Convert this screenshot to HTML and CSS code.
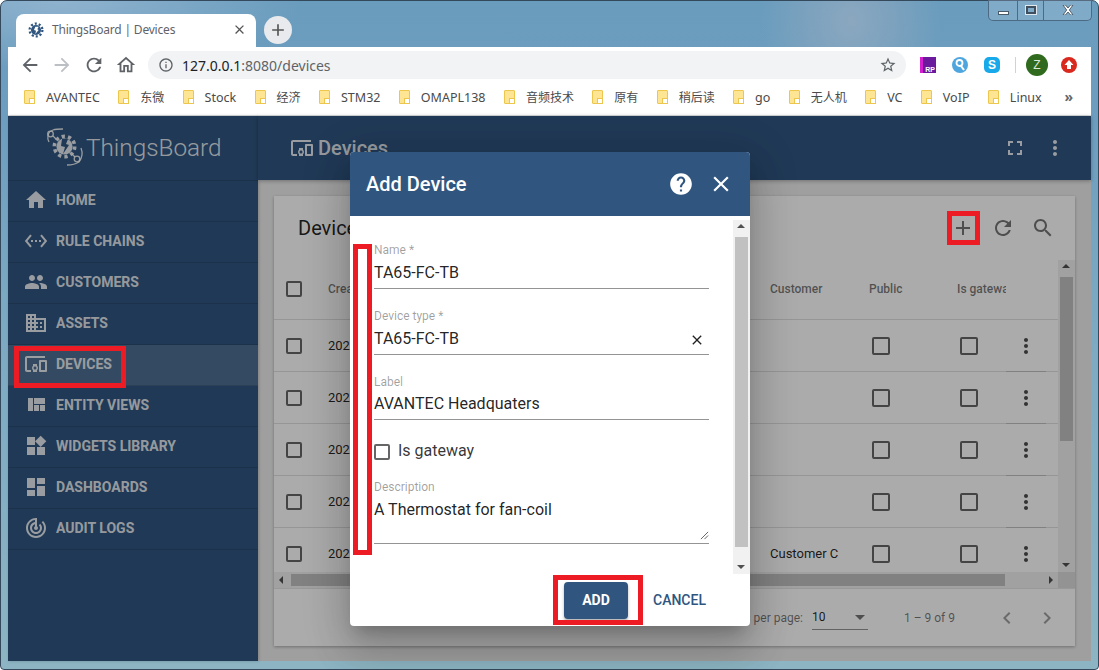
FILE: index.html
```html
<!DOCTYPE html>
<html lang="en">
<head>
<meta charset="utf-8">
<title>ThingsBoard | Devices</title>
<link rel="stylesheet" href="styles.css">
</head>
<body>
<svg class="defs" width="0" height="0" aria-hidden="true">
  <symbol id="i-home" viewBox="0 0 24 24"><path d="M10 20v-6h4v6h5v-8h3L12 3 2 12h3v8z"/></symbol>
  <symbol id="i-rule" viewBox="0 0 24 24"><path d="M7.77 6.76L6.23 5.48.82 12l5.41 6.52 1.54-1.28L3.42 12l4.35-5.24zM7 13h2v-2H7v2zm10-2h-2v2h2v-2zm-6 2h2v-2h-2v2zm6.77-7.52l-1.54 1.28L20.58 12l-4.35 5.24 1.54 1.28L23.18 12l-5.41-6.52z"/></symbol>
  <symbol id="i-people" viewBox="0 0 24 24"><path d="M16 11c1.66 0 2.99-1.34 2.99-3S17.66 5 16 5c-1.66 0-3 1.34-3 3s1.34 3 3 3zm-8 0c1.66 0 2.99-1.34 2.99-3S9.66 5 8 5C6.34 5 5 6.34 5 8s1.34 3 3 3zm0 2c-2.33 0-7 1.17-7 3.5V19h14v-2.5c0-2.33-4.67-3.5-7-3.5zm8 0c-.29 0-.62.02-.97.05 1.16.84 1.97 1.97 1.97 3.45V19h6v-2.5c0-2.33-4.67-3.5-7-3.5z"/></symbol>
  <symbol id="i-domain" viewBox="0 0 24 24"><path d="M12 7V3H2v18h20V7H12zM6 19H4v-2h2v2zm0-4H4v-2h2v2zm0-4H4V9h2v2zm0-4H4V5h2v2zm4 12H8v-2h2v2zm0-4H8v-2h2v2zm0-4H8V9h2v2zm0-4H8V5h2v2zm10 12h-8v-2h2v-2h-2v-2h2v-2h-2V9h8v10zm-2-8h-2v2h2v-2zm0 4h-2v2h2v-2z"/></symbol>
  <symbol id="i-devices" viewBox="0 0 24 24"><path d="M3 6h18V4H3c-1.1 0-2 .9-2 2v12c0 1.1.9 2 2 2h4v-2H3V6zm10 6H9v1.78c-.61.55-1 1.33-1 2.22s.39 1.67 1 2.22V20h4v-1.78c.61-.55 1-1.34 1-2.22s-.39-1.67-1-2.22V12zm-2 5.5c-.83 0-1.5-.67-1.5-1.5s.67-1.5 1.5-1.5 1.5.67 1.5 1.5-.67 1.5-1.5 1.5zM22 8h-6c-.5 0-1 .5-1 1v10c0 .5.5 1 1 1h6c.5 0 1-.5 1-1V9c0-.5-.5-1-1-1zm-1 10h-4v-8h4v8z"/></symbol>
  <symbol id="i-quilt" viewBox="0 0 24 24"><path d="M10 18h5v-6h-5v6zm-6 0h5V5H4v13zm12 0h5v-6h-5v6zM10 5v6h11V5H10z"/></symbol>
  <symbol id="i-widgets" viewBox="0 0 24 24"><path d="M13 13v8h8v-8h-8zM3 21h8v-8H3v8zM3 3v8h8V3H3zm13.66-1.31L11 7.34 16.66 13l5.66-5.66-5.66-5.65z"/></symbol>
  <symbol id="i-dash" viewBox="0 0 24 24"><path d="M3 13h8V3H3v10zm0 8h8v-6H3v6zm10 0h8V11h-8v10zm0-18v6h8V3h-8z"/></symbol>
  <symbol id="i-track" viewBox="0 0 24 24"><path d="M19.07 4.93l-1.41 1.41C19.1 7.79 20 9.79 20 12c0 4.42-3.58 8-8 8s-8-3.58-8-8c0-4.08 3.05-7.44 7-7.93v2.02C8.16 6.57 6 9.03 6 12c0 3.31 2.69 6 6 6s6-2.69 6-6c0-1.66-.67-3.16-1.76-4.24l-1.41 1.41C15.55 9.9 16 10.9 16 12c0 2.21-1.79 4-4 4s-4-1.79-4-4c0-1.86 1.28-3.41 3-3.86v2.14c-.6.35-1 .98-1 1.72 0 1.1.9 2 2 2s2-.9 2-2c0-.74-.4-1.38-1-1.72V2h-1C6.48 2 2 6.48 2 12s4.48 10 10 10 10-4.48 10-10c0-2.76-1.12-5.26-2.93-7.07z"/></symbol>
  <symbol id="i-help" viewBox="0 0 24 24"><path d="M12 2C6.48 2 2 6.48 2 12s4.48 10 10 10 10-4.48 10-10S17.52 2 12 2zm1 17h-2v-2h2v2zm2.07-7.75l-.9.92C13.45 12.9 13 13.5 13 15h-2v-.5c0-1.1.45-2.1 1.17-2.83l1.24-1.26c.37-.36.59-.86.59-1.41 0-1.1-.9-2-2-2s-2 .9-2 2H8c0-2.21 1.79-4 4-4s4 1.79 4 4c0 .88-.36 1.68-.93 2.25z"/></symbol>
  <symbol id="i-close" viewBox="0 0 24 24"><path d="M19 6.41L17.59 5 12 10.59 6.41 5 5 6.41 10.59 12 5 17.59 6.41 19 12 13.41 17.59 19 19 17.59 13.41 12z"/></symbol>
  <symbol id="i-add" viewBox="0 0 24 24"><path d="M19 13h-6v6h-2v-6H5v-2h6V5h2v6h6v2z"/></symbol>
  <symbol id="i-refresh" viewBox="0 0 24 24"><path d="M17.65 6.35C16.2 4.9 14.21 4 12 4c-4.42 0-7.99 3.58-7.99 8s3.57 8 7.99 8c3.73 0 6.84-2.55 7.73-6h-2.08c-.82 2.33-3.04 4-5.65 4-3.31 0-6-2.69-6-6s2.69-6 6-6c1.66 0 3.14.69 4.22 1.78L13 11h7V4l-2.35 2.35z"/></symbol>
  <symbol id="i-search" viewBox="0 0 24 24"><path d="M15.5 14h-.79l-.28-.27C15.41 12.59 16 11.11 16 9.5 16 5.91 13.09 3 9.5 3S3 5.91 3 9.5 5.91 16 9.5 16c1.61 0 3.09-.59 4.23-1.57l.27.28v.79l5 4.99L20.49 19l-4.99-5zm-6 0C7.01 14 5 11.99 5 9.5S7.01 5 9.5 5 14 7.01 14 9.5 11.99 14 9.5 14z"/></symbol>
  <symbol id="i-more" viewBox="0 0 24 24"><path d="M12 8c1.1 0 2-.9 2-2s-.9-2-2-2-2 .9-2 2 .9 2 2 2zm0 2c-1.1 0-2 .9-2 2s.9 2 2 2 2-.9 2-2-.9-2-2-2zm0 6c-1.1 0-2 .9-2 2s.9 2 2 2 2-.9 2-2-.9-2-2-2z"/></symbol>
  <symbol id="i-full" viewBox="0 0 24 24"><path d="M7 14H5v5h5v-2H7v-3zm-2-4h2V7h3V5H5v5zm12 7h-3v2h5v-5h-2v3zM14 5v2h3v3h2V5h-5z"/></symbol>
  <symbol id="i-left" viewBox="0 0 24 24"><path d="M15.41 7.41L14 6l-6 6 6 6 1.41-1.41L10.83 12z"/></symbol>
  <symbol id="i-right" viewBox="0 0 24 24"><path d="M10 6L8.59 7.41 13.17 12l-4.58 4.59L10 18l6-6z"/></symbol>
  <symbol id="i-back" viewBox="0 0 24 24"><path d="M20 11H7.83l5.59-5.59L12 4l-8 8 8 8 1.41-1.41L7.83 13H20v-2z"/></symbol>
  <symbol id="i-forward" viewBox="0 0 24 24"><path d="M12 4l-1.41 1.41L16.17 11H4v2h12.17l-5.58 5.59L12 20l8-8z"/></symbol>
  <symbol id="i-homeline" viewBox="0 0 24 24"><path d="M12 5.69l5 4.5V18h-2v-6H9v6H7v-7.81l5-4.5M12 3L2 12h3v8h6v-6h2v6h6v-8h3L12 3z"/></symbol>
  <symbol id="i-info" viewBox="0 0 24 24"><path d="M11 7h2v2h-2zm0 4h2v6h-2zm1-9C6.48 2 2 6.48 2 12s4.48 10 10 10 10-4.48 10-10S17.52 2 12 2zm0 18c-4.41 0-8-3.59-8-8s3.59-8 8-8 8 3.59 8 8-3.59 8-8 8z"/></symbol>
  <symbol id="i-star" viewBox="0 0 24 24"><path d="M22 9.24l-7.19-.62L12 2 9.19 8.63 2 9.24l5.46 4.73L5.82 21 12 17.27 18.18 21l-1.63-7.03L22 9.24zM12 15.4l-3.76 2.27 1-4.28-3.32-2.88 4.38-.38L12 6.1l1.71 4.04 4.38.38-3.32 2.88 1 4.28L12 15.4z"/></symbol>
  <symbol id="i-gear" viewBox="0 0 24 24">
    <circle cx="12" cy="12" r="7.6"/>
    <circle cx="12" cy="12" r="9.600" fill="none" stroke="currentColor" stroke-width="3.400" stroke-dasharray="3.100 2.930"/>
  </symbol>
</svg>

<div class="window">
  <div class="winctl">
    <span class="winbtn win-min"><i class="g-min"></i></span>
    <span class="winbtn win-max"><i class="g-max"></i></span>
    <span class="winbtn win-close"><svg class="g-x" viewBox="0 0 12 10"><path d="M1 0h2.400L6 3l2.600-3H11L7.300 5 11 10H8.600L6 7 3.400 10H1l3.700-5z"/></svg></span>
  </div>

  <div class="tabstrip">
    <div class="tab">
      <span class="favicon">
        <svg class="ic-16" viewBox="0 0 24 24"><use href="#i-gear" width="24" height="24"/><path class="fav-bolt" d="M11 7h5l-2 4 2 1-5 6 1-5-3-1z"/></svg>
      </span>
      <span class="tab-title">ThingsBoard | Devices</span>
      <svg class="ic-tabx" viewBox="0 0 24 24"><use href="#i-close"/></svg>
    </div>
    <span class="newtab"><svg class="ic-18" viewBox="0 0 24 24"><use href="#i-add"/></svg></span>
  </div>

  <div class="toolbar">
    <svg class="nav-ic" viewBox="0 0 24 24"><use href="#i-back"/></svg>
    <svg class="nav-ic off" viewBox="0 0 24 24"><use href="#i-forward"/></svg>
    <svg class="nav-ic" viewBox="0 0 24 24"><use href="#i-refresh"/></svg>
    <svg class="nav-ic" viewBox="0 0 24 24"><use href="#i-homeline"/></svg>
    <div class="omnibox">
      <svg class="omni-info" viewBox="0 0 24 24"><use href="#i-info"/></svg>
      <span class="url"><b>127.0.0.1</b>:8080/devices</span>
      <svg class="omni-star" viewBox="0 0 24 24"><use href="#i-star"/></svg>
    </div>
    <div class="exts">
      <span class="ext ext-rp">RP</span>
      <span class="ext ext-find"><svg viewBox="0 0 16 16"><circle cx="7.500" cy="6" r="3" fill="none" stroke="#fff" stroke-width="1.800"/><path d="M9 9l3 4" stroke="#fff" stroke-width="2"/></svg></span>
      <span class="ext ext-skype">S</span>
      <span class="ext-sep"></span>
      <span class="ext ext-z">Z</span>
      <span class="ext ext-up"><svg viewBox="0 0 16 16"><path d="M8 3l4.500 5H10v4H6V8H3.500z" fill="#fff"/></svg></span>
    </div>
  </div>

  <div class="bookmarks">
    <span class="bm"><i class="folder"></i>AVANTEC</span>
    <span class="bm cjk"><i class="folder"></i>东微</span>
    <span class="bm"><i class="folder"></i>Stock</span>
    <span class="bm cjk"><i class="folder"></i>经济</span>
    <span class="bm"><i class="folder"></i>STM32</span>
    <span class="bm"><i class="folder"></i>OMAPL138</span>
    <span class="bm cjk"><i class="folder"></i>音频技术</span>
    <span class="bm cjk"><i class="folder"></i>原有</span>
    <span class="bm cjk"><i class="folder"></i>稍后读</span>
    <span class="bm"><i class="folder"></i>go</span>
    <span class="bm cjk"><i class="folder"></i>无人机</span>
    <span class="bm"><i class="folder"></i>VC</span>
    <span class="bm"><i class="folder"></i>VoIP</span>
    <span class="bm"><i class="folder"></i>Linux</span>
    <span class="bm-more">»</span>
  </div>

  <div class="app">
    <aside class="sidenav">
      <div class="brand">
        <svg class="brand-logo" viewBox="0 0 44 40">
          <g transform="translate(7.800 6.800) scale(1.060)"><use href="#i-gear" width="24" height="24"/></g>
          <path class="logo-bolt" d="M18 12h6l-2 5 3 1-6 9 2-7-4-1z"/>
          <circle class="logo-line" cx="6.500" cy="7" r="2.800"/>
          <circle class="logo-line" cx="33" cy="32" r="2.800"/>
          <path class="logo-line" d="M5 15C3 11 3 5 9 3c3-1 6-1 10-1M37 21c2 5 1 10-2 14-3 2-7 3-12 3M9 9l3 3M31 30l-3-3"/>
        </svg>
        <span class="brand-name">ThingsBoard</span>
      </div>
      <a class="nav-item"><svg viewBox="0 0 24 24"><use href="#i-home"/></svg>Home</a>
      <a class="nav-item"><svg viewBox="0 0 24 24"><use href="#i-rule"/></svg>Rule chains</a>
      <a class="nav-item"><svg viewBox="0 0 24 24"><use href="#i-people"/></svg>Customers</a>
      <a class="nav-item"><svg viewBox="0 0 24 24"><use href="#i-domain"/></svg>Assets</a>
      <a class="nav-item active"><svg viewBox="0 0 24 24"><use href="#i-devices"/></svg>Devices</a>
      <a class="nav-item"><svg viewBox="0 0 24 24"><use href="#i-quilt"/></svg>Entity views</a>
      <a class="nav-item"><svg viewBox="0 0 24 24"><use href="#i-widgets"/></svg>Widgets library</a>
      <a class="nav-item"><svg viewBox="0 0 24 24"><use href="#i-dash"/></svg>Dashboards</a>
      <a class="nav-item"><svg viewBox="0 0 24 24"><use href="#i-track"/></svg>Audit logs</a>
    </aside>

    <main class="main">
      <header class="topbar">
        <svg class="ic-24" viewBox="0 0 24 24"><use href="#i-devices"/></svg>
        <span class="topbar-title">Devices</span>
        <span class="topbar-fill"></span>
        <svg class="ic-24 top-full" viewBox="0 0 24 24"><use href="#i-full"/></svg>
        <svg class="ic-24" viewBox="0 0 24 24"><use href="#i-more"/></svg>
      </header>
      <div class="content">
        <section class="card">
          <div class="card-head">
            <h2 class="card-title">Devices</h2>
            <span class="topbar-fill"></span>
            <svg class="ic-24 tool" viewBox="0 0 24 24"><use href="#i-add"/></svg>
            <svg class="ic-24 tool" viewBox="0 0 24 24"><use href="#i-refresh"/></svg>
            <svg class="ic-24 tool" viewBox="0 0 24 24"><use href="#i-search"/></svg>
          </div>
          <div class="table-area">
            <div class="table">
              <div class="row head">
                <span class="c-sel"><i class="check small"></i></span>
                <span class="c-date">Created time</span>
                <span class="c-cust">Customer</span>
                <span class="c-pub">Public</span>
                <span class="c-gw">Is gateway</span>
                <span class="c-act"></span>
              </div>
              <div class="row">
                <span class="c-sel"><i class="check small"></i></span><span class="c-date">2021</span><span class="c-cust"></span>
                <span class="c-pub"><i class="check"></i></span><span class="c-gw"><i class="check"></i></span>
                <span class="c-act"><svg class="ic-24 more" viewBox="0 0 24 24"><use href="#i-more"/></svg></span>
              </div>
              <div class="row">
                <span class="c-sel"><i class="check small"></i></span><span class="c-date">2021</span><span class="c-cust"></span>
                <span class="c-pub"><i class="check"></i></span><span class="c-gw"><i class="check"></i></span>
                <span class="c-act"><svg class="ic-24 more" viewBox="0 0 24 24"><use href="#i-more"/></svg></span>
              </div>
              <div class="row">
                <span class="c-sel"><i class="check small"></i></span><span class="c-date">2021</span><span class="c-cust"></span>
                <span class="c-pub"><i class="check"></i></span><span class="c-gw"><i class="check"></i></span>
                <span class="c-act"><svg class="ic-24 more" viewBox="0 0 24 24"><use href="#i-more"/></svg></span>
              </div>
              <div class="row">
                <span class="c-sel"><i class="check small"></i></span><span class="c-date">2021</span><span class="c-cust"></span>
                <span class="c-pub"><i class="check"></i></span><span class="c-gw"><i class="check"></i></span>
                <span class="c-act"><svg class="ic-24 more" viewBox="0 0 24 24"><use href="#i-more"/></svg></span>
              </div>
              <div class="row">
                <span class="c-sel"><i class="check small"></i></span><span class="c-date">2021</span><span class="c-cust">Customer C</span>
                <span class="c-pub"><i class="check"></i></span><span class="c-gw"><i class="check"></i></span>
                <span class="c-act"><svg class="ic-24 more" viewBox="0 0 24 24"><use href="#i-more"/></svg></span>
              </div>
            </div>
            <div class="vbar"><i class="arr up"></i><i class="vthumb"></i><i class="arr down"></i></div>
          </div>
          <div class="hbar-row">
            <div class="hbar"><i class="arr lf"></i><i class="hthumb"></i><i class="arr rt"></i></div>
            <span class="corner"></span>
          </div>
          <div class="pager">
            <span class="pg-label">Items per page:</span>
            <span class="pg-select">10<i class="pg-caret"></i></span>
            <span class="pg-range">1 – 9 of 9</span>
            <svg class="ic-24 pg-nav" viewBox="0 0 24 24"><use href="#i-left"/></svg>
            <svg class="ic-24 pg-nav" viewBox="0 0 24 24"><use href="#i-right"/></svg>
          </div>
        </section>
      </div>
    </main>

    <div class="backdrop"></div>

    <div class="dialog">
      <header class="dlg-head">
        <h2 class="dlg-title">Add Device</h2>
        <svg class="dlg-ic dlg-help" viewBox="0 0 24 24"><use href="#i-help"/></svg>
        <svg class="dlg-ic" viewBox="0 0 24 24"><use href="#i-close"/></svg>
      </header>
      <div class="dlg-body">
        <div class="form">
          <div class="field"><label>Name *</label><div class="val">TA65-FC-TB</div></div>
          <div class="field"><label>Device type *</label><div class="val">TA65-FC-TB<svg class="clear" viewBox="0 0 24 24"><use href="#i-close"/></svg></div></div>
          <div class="field tight"><label>Label</label><div class="val">AVANTEC Headquaters</div></div>
          <div class="gateway"><i class="check small"></i>Is gateway</div>
          <div class="field desc"><label>Description</label><div class="val">A Thermostat for fan-coil<svg class="grip" viewBox="0 0 10 10"><path d="M1 9l8-8M5 9l4-4" stroke="#555" fill="none"/></svg></div></div>
        </div>
        <div class="dlg-scroll"><i class="arr up"></i><i class="dthumb"></i><i class="arr down"></i></div>
      </div>
      <footer class="dlg-actions">
        <button class="btn-add">ADD</button>
        <button class="btn-cancel">CANCEL</button>
      </footer>
    </div>

    <span class="mark mark-devices"></span>
    <span class="mark mark-plus"></span>
    <span class="mark mark-form"></span>
    <span class="mark mark-add"></span>
  </div>
</div>
</body>
</html>
```

FILE: styles.css
```css
* { box-sizing: border-box; }
html, body { margin: 0; padding: 0; width: 1099px; height: 670px; overflow: hidden; }
body { font-family: Roboto, "Noto Sans CJK SC", sans-serif; }
.defs { position: absolute; }
svg { fill: currentColor; display: block; flex: none; }

.window {
  position: relative;
  width: 1099px; height: 670px;
  display: flex; flex-direction: column;
  border: 1px solid #34495c;
  border-radius: 7px 7px 4px 4px;
  background:
    radial-gradient(ellipse 90px 110px at 850px 20px, #8ba7bf 0%, rgba(139,167,191,0) 100%),
    radial-gradient(ellipse 240px 70px at 60px 0, #8fb3cf 0%, rgba(143,179,207,0) 100%),
    linear-gradient(180deg, #6a9cbd 0, #6e9ebf 120px, #7ba9c2 300px, #8cb4c2 660px);
}

/* window controls */
.winctl {
  position: absolute; right: 6px; top: -1px;
  display: flex; height: 21px;
  border: 1px solid #4d6a85; border-top: 0; border-radius: 0 0 5px 5px;
  background: rgba(190,215,235,.25);
}
.winbtn { display: flex; align-items: center; justify-content: center; height: 100%; border-right: 1px solid #4d6a85; }
.winbtn:last-child { border-right: 0; }
.win-min { width: 29px; }
.win-max { width: 26px; }
.win-close { width: 47px; }
.g-min { width: 11px; height: 4px; margin-top: 5px; background: #fff; border: 1px solid #4a5a68; }
.g-max { width: 10px; height: 8px; background: transparent; border: 2px solid #3f4f5e; box-shadow: 0 0 0 1px #dfe8ef; }
.g-x { width: 12px; height: 10px; fill: #fff; stroke: #3a4652; stroke-width: .8; }

/* tab strip */
.tabstrip { height: 46px; flex: none; display: flex; align-items: flex-end; padding-left: 15px; }
.tab {
  width: 240px; height: 33px; background: #fff;
  border-radius: 8px 8px 0 0;
  display: flex; align-items: center; padding: 0 9px 2px 12px;
  font-family: "Noto Sans", sans-serif; font-size: 12px; color: #5f6368;
}
.favicon { color: #305680; width: 16px; margin-right: 8px; }
.fav-bolt { fill: #fff; }
.ic-16 { width: 16px; height: 16px; }
.tab-title { flex: 1; letter-spacing: -.19px; }
.ic-tabx { width: 15px; height: 15px; color: #555; }
.newtab {
  width: 28px; height: 28px; border-radius: 50%; background: #e8eaed; color: #555;
  margin: 0 0 3px 8px; display: flex; align-items: center; justify-content: center;
}
.ic-18 { width: 20px; height: 20px; }

/* toolbar */
.toolbar {
  height: 38px; flex: none; margin: 0 7px; background: #fff;
  display: flex; align-items: center; padding: 0 0 2px 11px;
}
.nav-ic { width: 22px; height: 22px; margin-right: 10px; color: #5f6368; }
.nav-ic.off { color: #bcbfc3; }
.omnibox {
  width: 758px; height: 28px; margin-left: 1px; border-radius: 14px; background: #f1f3f4;
  display: flex; align-items: center; padding: 0 9px 0 10px;
}
.omni-info { width: 16px; height: 16px; color: #5f6368; margin-right: 8px; }
.url { flex: 1; font-family: "Noto Sans", sans-serif; font-size: 14px; color: #5f6368; }
.url b { font-weight: 400; color: #202124; }
.omni-star { width: 18px; height: 18px; color: #5f6368; }
.exts { display: flex; align-items: center; flex: 1; padding-left: 14px; }
.ext { width: 16px; height: 16px; margin-right: 16px; display: flex; align-items: center; justify-content: center; font-family: "Liberation Sans", sans-serif; }
.ext svg { width: 16px; height: 16px; }
.ext-rp { background: linear-gradient(90deg,#d41fd0 0 3px,#6b1a9d 3px); color: #fff; font-size: 7px; font-weight: 700; align-items: flex-end; justify-content: flex-end; padding-right: 1px; }
.ext-find { border-radius: 50%; background: #4fa6de; }
.ext-skype { border-radius: 5px; background: #18a9ea; color: #fff; font-weight: 700; font-size: 12px; }
.ext-sep { width: 1px; height: 16px; background: #d0d3d6; margin: 0 10px 0 -1px; }
.ext-z { width: 22px; height: 22px; border-radius: 50%; background: #2f6a1e; color: #dfe8d8; font-size: 12px; margin-right: 13px; }
.ext-up { width: 16px; height: 16px; border-radius: 50%; background: #d9281e; margin-right: 0; }

/* bookmarks */
.bookmarks {
  height: 31px; flex: none; margin: 0 7px; background: #fff;
  display: flex; align-items: center; padding: 0 0 6px 16px; gap: 18.4px;
  font-family: "Noto Sans", "Noto Sans CJK SC", sans-serif; font-size: 12.5px; color: #4a4a4a;
  border-bottom: 1px solid #d9dbdd;
}
.bm { display: flex; align-items: center; white-space: nowrap; }
.bm.cjk { font-size: 12px; }
.folder {
  position: relative; display: block; width: 11px; height: 14px; margin-right: 11px;
  background: #fde593; border: 1px solid #edc64e; border-radius: 1px;
}
.folder::after {
  content: ""; position: absolute; right: -1px; bottom: -1px; width: 4px; height: 4px;
  background: #fff; border: 1px solid #edc64e;
}
.bm-more { margin: 0 18px 0 auto; font-size: 14px; font-weight: 700; color: #666; line-height: 1; }

/* app */
.app {
  position: relative; flex: 1; margin: 0 7px 8px; min-height: 0;
  display: flex; background: #eee;
}
.sidenav {
  width: 250px; flex: none; background: #305680; color: rgba(255,255,255,.87);
  display: flex; flex-direction: column;
  box-shadow: 1px 0 3px rgba(0,0,0,.2); z-index: 1;
}
.brand {
  height: 65px; flex: none; display: flex; align-items: center; padding: 0 0 2px 36px;
  border-bottom: 1px solid rgba(0,0,0,.12);
}
.brand-logo { width: 44px; height: 40px; margin-right: -2px; }
.logo-bolt { fill: #305680; }
.logo-line { fill: none; stroke: currentColor; stroke-width: 1.300; }
.brand-name { font-size: 24.300px; font-weight: 300; }
.nav-item {
  height: 41px; flex: none; display: flex; align-items: center; padding: 0 0 2px 16px;
  font-size: 14px; font-weight: 700; text-transform: uppercase;
  border-bottom: 1px solid rgba(0,0,0,.12);
}
.nav-item svg { width: 24px; height: 24px; margin-right: 8px; }
.nav-item.active { background: rgba(255,255,255,.15); }

.main { flex: 1; min-width: 0; display: flex; flex-direction: column; }
.topbar {
  height: 64px; flex: none; background: #305680; color: rgba(255,255,255,.87);
  display: flex; align-items: center; padding: 0 24px 0 32px;
  box-shadow: 0 1px 4px rgba(0,0,0,.3); z-index: 1;
}
.ic-24 { width: 24px; height: 24px; }
.topbar-title { font-size: 20px; font-weight: 500; margin-left: 4px; }
.topbar-fill { flex: 1; }
.top-full { margin-right: 16px; }
.content { flex: 1; min-height: 0; padding: 16px 16px 15px; }
.card {
  height: 100%; background: #fff; display: flex; flex-direction: column;
  box-shadow: 0 1px 3px rgba(0,0,0,.3);
}
.card-head { height: 64px; flex: none; display: flex; align-items: center; padding: 0 20px 0 24px; color: rgba(0,0,0,.87); }
.card-title { margin: 0; font-size: 20px; font-weight: 400; }
.tool { color: rgba(0,0,0,.54); margin-left: 16px; }

.table-area { flex: 1; min-height: 0; display: flex; }
.table { flex: 1; min-width: 0; overflow: hidden; }
.row {
  height: 52px; display: grid; grid-template-columns: 54px 442px 99px 88px 49px 40px 12px;
  align-items: center; font-size: 13px; color: rgba(0,0,0,.87);
  border-bottom: 1px solid rgba(0,0,0,.12);
}
.row.head { height: 60px; padding-bottom: 2px; font-size: 12px; font-weight: 500; color: rgba(0,0,0,.54); }
.c-sel { padding-left: 12px; display: flex; }
.c-gw { overflow: hidden; white-space: nowrap; }
.c-pub .check { margin-left: 3px; }
.c-gw .check { margin-left: 3px; }
.c-act { display: flex; justify-content: center; align-self: stretch; align-items: center; }
.row:not(.head) .c-act { border-bottom: 1px solid rgba(0,0,0,.14); margin-bottom: -1px; }
.more { color: rgba(0,0,0,.7); }
.check {
  display: block; width: 18px; height: 18px; border: 2px solid rgba(0,0,0,.6); border-radius: 2px;
}
.check.small { width: 16px; height: 16px; }

.vbar, .dlg-scroll { position: relative; width: 17px; flex: none; background: #f1f1f1; }
.vthumb { position: absolute; left: 2px; right: 2px; top: 17px; height: 164px; background: #c1c1c1; }
.dthumb { position: absolute; left: 2px; right: 2px; top: 17px; bottom: 27px; background: #c1c1c1; }
.arr { position: absolute; width: 0; height: 0; border: 4px solid transparent; }
.arr.up { left: 4px; top: 4px; border-top: 0; border-bottom: 4px solid #505050; }
.arr.down { left: 4px; bottom: 5px; border-bottom: 0; border-top: 4px solid #505050; }
.arr.lf { left: 5px; top: 4px; border-left: 0; border-right: 4px solid #505050; }
.arr.rt { right: 5px; top: 4px; border-right: 0; border-left: 4px solid #505050; }
.hbar-row { height: 17px; flex: none; display: flex; border-bottom: 1px solid rgba(0,0,0,.1); }
.hbar { position: relative; flex: 1; background: #f1f1f1; }
.hthumb { position: absolute; left: 17px; width: 714px; top: 2px; bottom: 2px; background: #c1c1c1; }
.corner { width: 17px; background: #dcdcdc; }
.pager {
  height: 57px; flex: none; display: flex; align-items: center; justify-content: flex-end;
  padding: 0 16px 0 0; font-size: 12px; color: rgba(0,0,0,.54);
}
.pg-select {
  position: relative; width: 56px; height: 24px; margin: 1px 36px 0 9px; line-height: 22px;
  font-size: 12px; color: rgba(0,0,0,.87); border-bottom: 1px solid rgba(0,0,0,.42);
}
.pg-caret { position: absolute; right: 3px; top: 9px; border: 5px solid transparent; border-bottom: 0; border-top: 5px solid rgba(0,0,0,.54); }
.pg-nav { color: rgba(0,0,0,.38); margin-left: 16px; }
.pg-range { margin-right: 24px; }

/* dim layer */
.backdrop { position: absolute; inset: 0; background: rgba(0,0,0,.33); z-index: 2; }

/* dialog */
.dialog {
  position: absolute; left: 342px; top: 36px; width: 400px; height: 474px; z-index: 3;
  background: #fff; border-radius: 4px; overflow: hidden;
  display: flex; flex-direction: column;
  box-shadow: 0 11px 15px -7px rgba(0,0,0,.2), 0 24px 38px 3px rgba(0,0,0,.14), 0 9px 46px 8px rgba(0,0,0,.12);
}
.dlg-head {
  height: 64px; flex: none; background: #305680; color: #fff;
  display: flex; align-items: center; padding: 0 16px;
}
.dlg-title { flex: 1; margin: 0; font-size: 20px; font-weight: 500; }
.dlg-ic { width: 26px; height: 26px; }
.dlg-help { margin-right: 14px; }
.dlg-body { height: 358px; flex: none; display: flex; }
.form { flex: 1; min-width: 0; padding: 26px 24px 0 24px; }
.dlg-scroll { margin-top: 4px; }
.field { margin-bottom: 19px; border-bottom: 1px solid rgba(0,0,0,.42); }
.field.tight { margin-bottom: 24px; }
.field label { display: block; height: 16px; line-height: 16px; font-size: 12px; color: rgba(0,0,0,.38); }
.val {
  position: relative; height: 24px; margin: 3px 0; line-height: 24px;
  font-size: 16px; color: rgba(0,0,0,.87);
}
.field.tight .val { margin: 2px 0 3px; }
.clear { position: absolute; right: 4px; top: 5px; width: 16px; height: 16px; color: #222; }
.gateway { display: flex; align-items: flex-start; height: 16px; margin-bottom: 19px; font-size: 16px; line-height: 14px; color: rgba(0,0,0,.8); }
.gateway .check { margin-right: 8px; }
.field.desc .val { height: 44px; margin: 4px 0 0; line-height: 22px; }
.grip { position: absolute; right: 0; bottom: 3px; width: 9px; height: 9px; }
.dlg-actions { flex: 1; display: flex; align-items: center; justify-content: flex-end; padding: 0 36px 0 0; gap: 17px; }
.btn-add, .btn-cancel { font: 500 14px Roboto, sans-serif; border: 0; padding: 0; }
.btn-add {
  width: 64px; height: 37px; background: #305680; color: #fff; border-radius: 4px;
  box-shadow: 0 2px 3px rgba(0,0,0,.3); font-weight: 700;
}
.btn-cancel { width: 69px; height: 37px; background: transparent; color: #305680; }

/* annotation rectangles */
.mark { position: absolute; z-index: 4; border: 5px solid #ed1c24; }
.mark-devices { left: 6px; top: 230px; width: 112px; height: 42px; }
.mark-plus { left: 939px; top: 95px; width: 33px; height: 34px; }
.mark-form { left: 345px; top: 128px; width: 19px; height: 311px; }
.mark-add { left: 545px; top: 459px; width: 90px; height: 50px; }
```
